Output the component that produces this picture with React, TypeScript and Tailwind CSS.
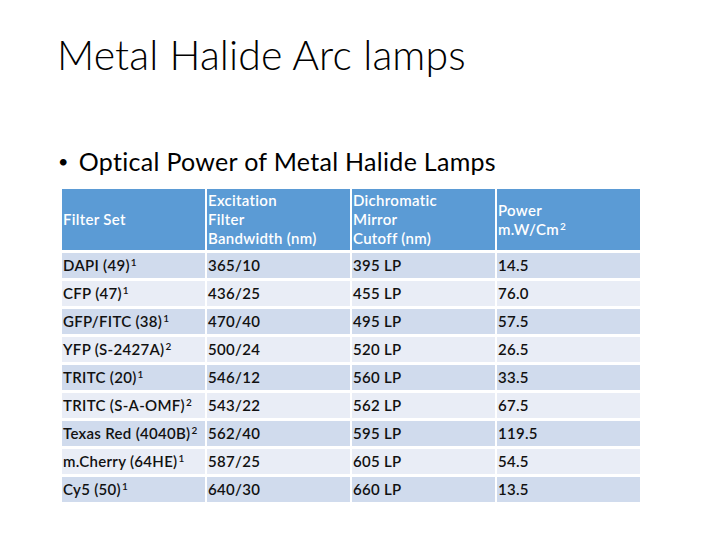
const rows = [
  ["DAPI (49)", "1", "365/10", "395 LP", "14.5"],
  ["CFP (47)", "1", "436/25", "455 LP", "76.0"],
  ["GFP/FITC (38)", "1", "470/40", "495 LP", "57.5"],
  ["YFP (S-2427A)", "2", "500/24", "520 LP", "26.5"],
  ["TRITC (20)", "1", "546/12", "560 LP", "33.5"],
  ["TRITC (S-A-OMF)", "2", "543/22", "562 LP", "67.5"],
  ["Texas Red (4040B)", "2", "562/40", "595 LP", "119.5"],
  ["m.Cherry (64HE)", "1", "587/25", "605 LP", "54.5"],
  ["Cy5 (50)", "1", "640/30", "660 LP", "13.5"],
];

const App = () => {
  return (
    <div
      className="w-[720px] h-[540px] bg-white text-black overflow-hidden"
      style={{ fontFamily: "Lato, 'Open Sans', sans-serif" }}
    >
      <div className="pl-[57px] pt-[30px]">
        <h1 className="text-[41px] font-light leading-[50px] tracking-[0.1px]">
          Metal Halide Arc lamps
        </h1>
        <p className="mt-[66px] text-[25px] leading-[30px] tracking-[0.3px] flex items-center">
          <span className="text-[18px] mr-[10px] ml-[1px]">•</span>Optical Power of Metal Halide Lamps
        </p>
      </div>
      <div className="ml-[62px] mt-[13px] w-[578px] grid grid-cols-4 gap-x-[2px] gap-y-[3px] text-[15px] font-semibold tracking-[0.3px] text-[#111]">
        <div className="h-[61px] bg-[#5b9bd5] text-white flex flex-col justify-center pl-[1px] leading-[19px]">
          <span>Filter Set</span>
        </div>
        <div className="h-[61px] bg-[#5b9bd5] text-white flex flex-col justify-center pl-[1px] leading-[19px]">
          <span>Excitation</span>
          <span>Filter</span>
          <span>Bandwidth (nm)</span>
        </div>
        <div className="h-[61px] bg-[#5b9bd5] text-white flex flex-col justify-center pl-[1px] leading-[19px]">
          <span>Dichromatic</span>
          <span>Mirror</span>
          <span>Cutoff (nm)</span>
        </div>
        <div className="h-[61px] bg-[#5b9bd5] text-white flex flex-col justify-center pl-[1px] leading-[19px]">
          <span>Power</span>
          <span>
            m.W/Cm<sup className="text-[10px] ml-[1px]">2</sup>
          </span>
        </div>
        {rows.map(([name, note, ex, dm, pw], r) => {
          const bg = r % 2 === 0 ? "bg-[#d0dbed]" : "bg-[#e9edf6]";
          return [
            <div key={`${r}-0`} className={`h-[25px] flex items-center pl-[1px] ${bg}`}>
              <span>
                {name}
                <sup className="text-[10px] ml-[1px]">{note}</sup>
              </span>
            </div>,
            <div key={`${r}-1`} className={`h-[25px] flex items-center pl-[1px] ${bg}`}>
              {ex}
            </div>,
            <div key={`${r}-2`} className={`h-[25px] flex items-center pl-[1px] ${bg}`}>
              {dm}
            </div>,
            <div key={`${r}-3`} className={`h-[25px] flex items-center pl-[1px] ${bg}`}>
              {pw}
            </div>,
          ];
        })}
      </div>
    </div>
  );
};

export default App;
